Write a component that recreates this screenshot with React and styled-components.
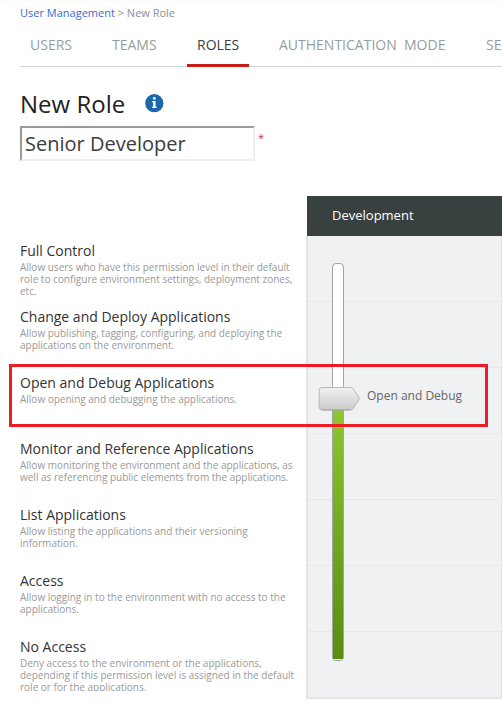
import React from 'react';
import styled, { createGlobalStyle } from 'styled-components';

const GlobalStyle = createGlobalStyle`
  * { box-sizing: border-box; }
  body { margin: 0; background: #fff; font-family: "Open Sans", sans-serif; overflow: hidden; }
`;

const Page = styled.main`
  position: relative;
  width: 502px;
  height: 707px;
  padding-left: 20px;
  overflow: hidden;
  border-top: 1px solid #fafafa;
`;

const Breadcrumb = styled.nav`
  height: 33px;
  padding-top: 4px;
  font-size: 11px;
  line-height: 16px;
  color: #8c9090;
  white-space: pre;
`;

const Crumb = styled.a`
  color: #3b68d8;
  text-decoration: none;
`;

const Tabs = styled.nav`
  display: flex;
  gap: 20px;
  height: 33px;
  box-shadow: inset 0 -1px #cad5d5;
`;

const Tab = styled.a`
  flex: 0 0 auto;
  width: ${({ $width }) => $width}px;
  padding-left: 10px;
  font-size: 14px;
  line-height: 22px;
  white-space: pre;
  color: ${({ $active }) => ($active ? '#3a4045' : '#93a0a0')};
  border-bottom: 3px solid ${({ $active }) => ($active ? '#c91c15' : 'transparent')};
`;

const Heading = styled.header`
  display: flex;
  gap: 20px;
  height: 59px;
  padding-top: 22px;
`;

const Title = styled.h1`
  margin: 0;
  font-size: 24px;
  font-weight: 400;
  line-height: 30px;
  color: #222;
`;

const InfoIcon = styled.svg`
  width: 19px;
  height: 19px;
  margin-top: 5px;
`;

const NameRow = styled.div`
  display: flex;
  gap: 3px;
  height: 70px;
`;

const NameInput = styled.input`
  width: 235px;
  height: 35px;
  padding: 0 3px 1px;
  border: 2px solid;
  border-color: #999 #eee #eee #999;
  border-radius: 0;
  outline: 0;
  background: #fff;
  color: #3c3c3c;
  font: 20px "Open Sans", sans-serif;
`;

const Required = styled.span`
  padding-top: 4px;
  font-size: 11px;
  line-height: 16px;
  color: #c8324a;
`;

const Permissions = styled.section`
  display: grid;
  grid-template-columns: 286px 196px;
`;

const LevelList = styled.ul`
  margin: 0;
  padding: 40px 0 0;
  list-style: none;
`;

const Level = styled.li`
  height: 66px;
  padding-top: 5px;
`;

const LevelText = styled.div`
  height: 54px;
  overflow: hidden;
`;

const LevelName = styled.h2`
  margin: 0;
  font-size: 14px;
  font-weight: 400;
  line-height: 20px;
  color: #333;
`;

const LevelInfo = styled.p`
  margin: 0;
  font-size: 10px;
  line-height: 12px;
  white-space: pre-line;
  color: #999;
`;

const Column = styled.div`
  display: flex;
  flex-direction: column;
`;

const ColumnHead = styled.div`
  height: 40px;
  margin-left: 1px;
  padding-left: 25px;
  background: #384040;
  color: #fff;
  font-size: 13px;
  line-height: 38px;
`;

const ColumnBody = styled.div`
  position: relative;
  height: 463px;
  border: solid #e2e4e4;
  border-width: 0 1px 2px 2px;
  background: #f0f1f3;
`;

const Cell = styled.div`
  height: 66px;
  border-bottom: 1px solid #e4e8e9;
`;

const Track = styled.div`
  position: absolute;
  left: 24px;
  top: 27px;
  display: flex;
  flex-direction: column;
  justify-content: flex-end;
  width: 12px;
  height: 398px;
  padding-bottom: 1px;
  border: 1px solid #a3a3a3;
  border-radius: 4px;
  background: #fff;
`;

const Fill = styled.div`
  height: 257px;
  background: linear-gradient(#90c832, #83bb29 20%, #5b8c12);
`;

const Handle = styled.svg`
  position: absolute;
  left: 10px;
  top: 150px;
  width: 43px;
  height: 26px;
`;

const HandleLabel = styled.span`
  position: absolute;
  left: 59px;
  top: 150px;
  font-size: 12px;
  line-height: 20px;
  color: #666;
  white-space: nowrap;
`;

const Highlight = styled.div`
  position: absolute;
  left: 9px;
  top: 363px;
  width: 479px;
  height: 63px;
  border: 3px solid #ee1c24;
  pointer-events: none;
`;

const tabs = [
  { label: 'USERS', width: 62 },
  { label: 'TEAMS', width: 65 },
  { label: 'ROLES', width: 62, active: true },
  { label: 'AUTHENTICATION  MODE', width: 187 },
  { label: 'SE', width: 36 },
];

const levels = [
  ['Full Control', 'Allow users who have this permission level in their default\nrole to configure environment settings, deployment zones,\netc.'],
  ['Change and Deploy Applications', 'Allow publishing, tagging, configuring, and deploying the\napplications on the environment.'],
  ['Open and Debug Applications', 'Allow opening and debugging the applications.'],
  ['Monitor and Reference Applications', 'Allow monitoring the environment and the applications, as\nwell as referencing public elements from the applications.'],
  ['List Applications', 'Allow listing the applications and their versioning\ninformation.'],
  ['Access', 'Allow logging in to the environment with no access to the\napplications.'],
  ['No Access', 'Deny access to the environment or the applications,\ndepending if this permission level is assigned in the default\nrole or for the applications.'],
];

export default function App() {
  return (
    <Page>
      <GlobalStyle />
      <Breadcrumb>
        <Crumb>User Management</Crumb>{' > New Role'}
      </Breadcrumb>
      <Tabs>
        {tabs.map((tab) => (
          <Tab key={tab.label} $width={tab.width} $active={tab.active}>{tab.label}</Tab>
        ))}
      </Tabs>
      <Heading>
        <Title>New Role</Title>
        <InfoIcon viewBox="0 0 19 19">
          <circle cx="9.3" cy="9.2" r="9.1" fill="#1c68ad" />
          <path d="M8 3.2h2.6v2.3H8z" fill="#fff" />
          <path d="M7 7h3.6v5.8h1.1v1.2H7v-1.2h1.1V8.2H7z" fill="#fff" />
        </InfoIcon>
      </Heading>
      <NameRow>
        <NameInput defaultValue="Senior Developer" />
        <Required>*</Required>
      </NameRow>
      <Permissions>
        <LevelList>
          {levels.map(([name, info]) => (
            <Level key={name}>
              <LevelText>
                <LevelName>{name}</LevelName>
                <LevelInfo>{info}</LevelInfo>
              </LevelText>
            </Level>
          ))}
        </LevelList>
        <Column>
          <ColumnHead>Development</ColumnHead>
          <ColumnBody>
            {levels.map(([name]) => <Cell key={name} />)}
            <Track><Fill /></Track>
            <Handle viewBox="0 0 43 26">
              <defs>
                <linearGradient id="handle" x1="0" y1="0" x2="0" y2="1">
                  <stop offset="0" stopColor="#f1f1f1" />
                  <stop offset="1" stopColor="#cccccc" />
                </linearGradient>
              </defs>
              <path d="M4 1.5H32.5Q34.2 1.5 35.2 2.8L41.6 12.5L35.2 22.5Q34.2 23.8 32.5 23.8H4Q1.2 23.8 1.2 21V4.3Q1.2 1.5 4 1.5Z" fill="url(#handle)" stroke="#b9b9bb" />
              <path d="M3.5 24H33" stroke="#999" strokeWidth="0.8" />
            </Handle>
            <HandleLabel>Open and Debug</HandleLabel>
          </ColumnBody>
        </Column>
      </Permissions>
      <Highlight />
    </Page>
  );
}
